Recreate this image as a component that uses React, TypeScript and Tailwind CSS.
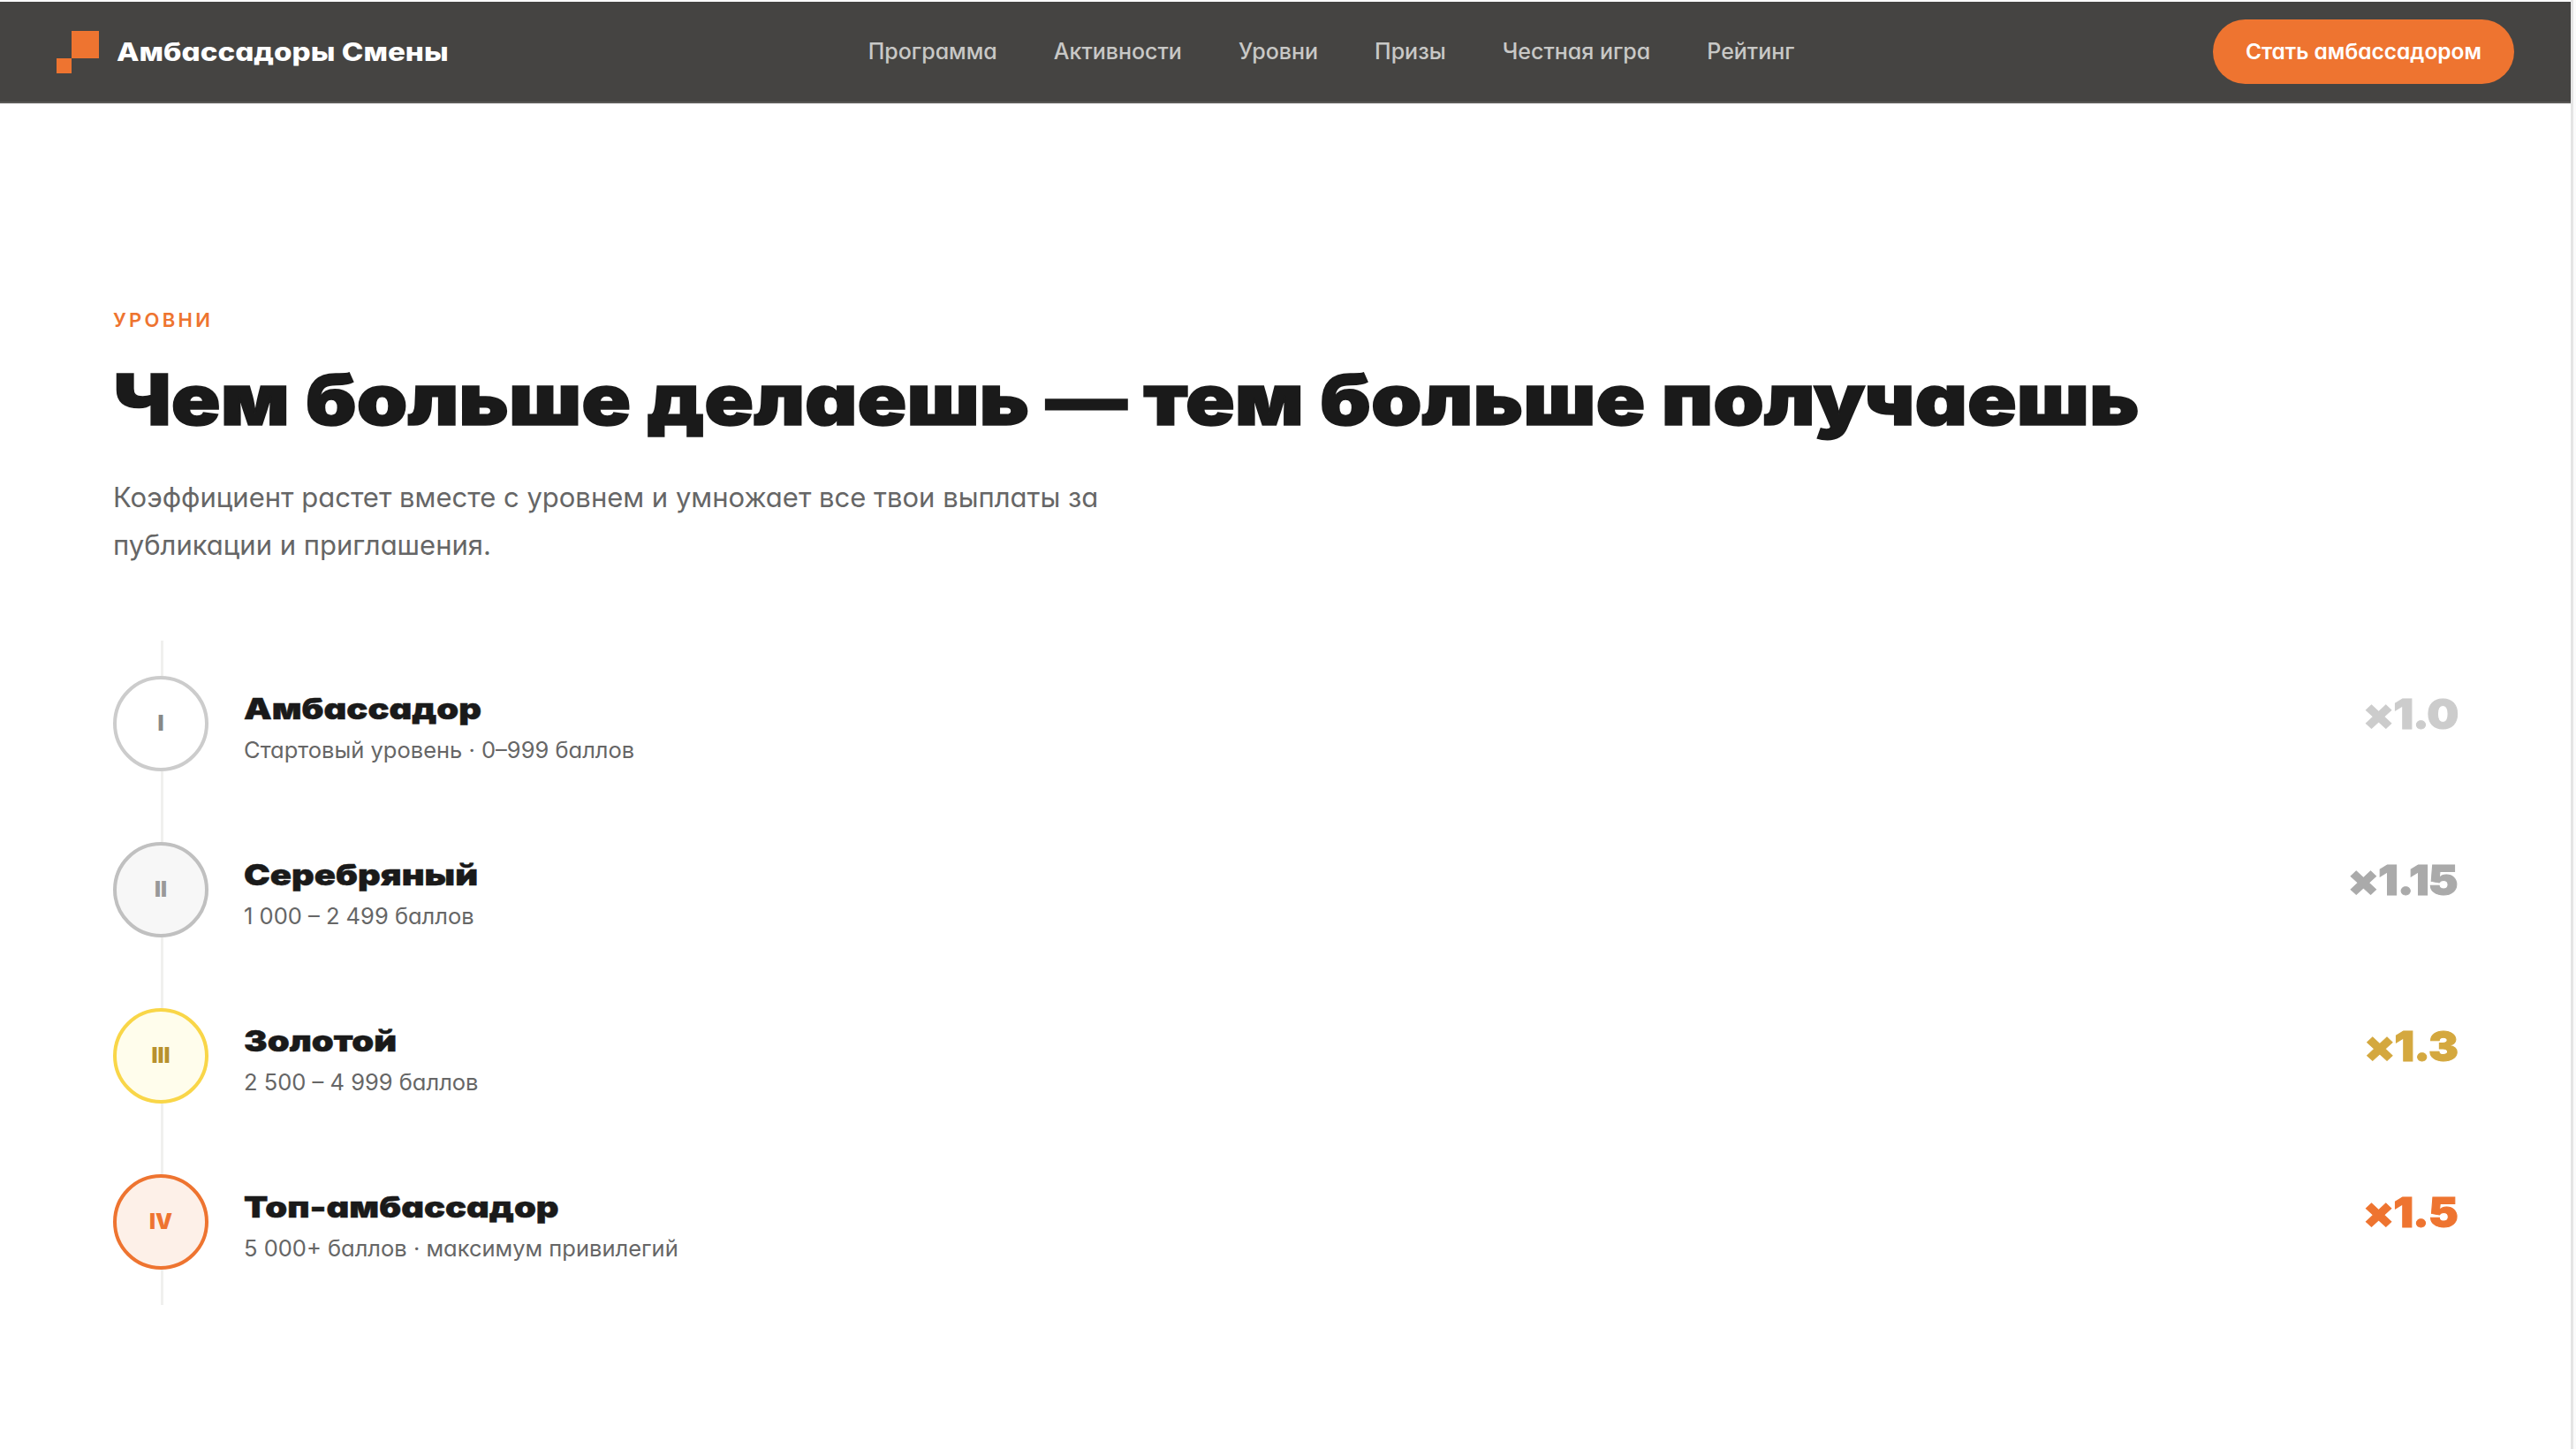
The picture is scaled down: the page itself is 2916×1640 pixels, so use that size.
const navItems = ["Программа", "Активности", "Уровни", "Призы", "Честная игра", "Рейтинг"];

const levels = [
  {
    num: "I",
    title: "Амбассадор",
    sub: "Стартовый уровень · 0–999 баллов",
    mult: "×1.0",
    circle: "border-[#cccccc] bg-white text-[#888888]",
    multColor: "text-[#cccccc]",
  },
  {
    num: "II",
    title: "Серебряный",
    sub: "1 000 – 2 499 баллов",
    mult: "×1.15",
    circle: "border-[#c0c0c0] bg-[#f7f7f7] text-[#999999]",
    multColor: "text-[#aaaaaa]",
  },
  {
    num: "III",
    title: "Золотой",
    sub: "2 500 – 4 999 баллов",
    mult: "×1.3",
    circle: "border-[#f9d648] bg-[#fffdec] text-[#b8902f]",
    multColor: "text-[#d4a83f]",
  },
  {
    num: "IV",
    title: "Топ-амбассадор",
    sub: "5 000+ баллов · максимум привилегий",
    mult: "×1.5",
    circle: "border-[#ee7430] bg-[#fdf0e8] text-[#ee7430]",
    multColor: "text-[#ee7430]",
  },
];

export default function App() {
  return (
    <div className="flex min-h-[1640px] overflow-hidden bg-white font-['Inter',sans-serif] [font-feature-settings:'cv11']">
      <div className="w-[2910px] shrink-0">
        <header className="mt-[2px] flex h-[115px] items-center justify-between border-b-[2px] border-[#5a5957] bg-[#454442] px-[64px]">
          <div className="flex items-center">
            <div className="flex h-[48px] w-[48px] shrink-0 items-start">
              <div className="mt-[31px] h-[17px] w-[17px] bg-[#ee7430]" />
              <div className="h-[31px] w-[31px] bg-[#ee7430]" />
            </div>
            <span className="ml-[20px] origin-left scale-x-[1.185] text-[28px] font-extrabold whitespace-nowrap text-white">
              Амбассадоры Смены
            </span>
          </div>
          <nav className="ml-[60px] flex gap-[64px]">
            {navItems.map((item) => (
              <a key={item} className="text-[25px] font-medium whitespace-nowrap text-[#c8c8c6]">
                {item}
              </a>
            ))}
          </nav>
          <button className="h-[73px] w-[341px] rounded-full bg-[#ee7430] text-[24.5px] font-semibold whitespace-nowrap text-white">
            Стать амбассадором
          </button>
        </header>

        <main className="px-[128px] pt-[231px]">
          <p className="text-[22px] leading-[28px] font-semibold tracking-[3.3px] text-[#ee7430]">УРОВНИ</p>
          <h1 className="mt-[28px] w-fit origin-left scale-x-[1.152] text-[80px] leading-[96px] font-black whitespace-nowrap text-[#1a1a1a] [-webkit-text-stroke:1.5px_#1a1a1a]">
            Чем больше делаешь — тем больше получаешь
          </h1>
          <p className="mt-[36px] w-[1200px] text-[31px] leading-[54px] text-[#666666]">
            Коэффициент растет вместе с уровнем и умножает все твои выплаты за
            <br />
            публикации и приглашения.
          </p>

          <div className="relative mt-[81px]">
            <div className="absolute top-0 bottom-0 left-[54px] w-[3px] bg-[#f0f0ee]" />
            {levels.map((lvl) => (
              <div key={lvl.num} className="relative flex h-[188px] items-center">
                <div
                  className={`flex h-[108px] w-[108px] shrink-0 items-center justify-center rounded-full border-[4.5px] text-[24px] font-black ${lvl.circle}`}
                >
                  {lvl.num}
                </div>
                <div className="ml-[40px] flex-1 pt-[10px]">
                  <div className="w-fit origin-left scale-x-[1.21] text-[33px] leading-[40px] font-black text-[#1a1a1a] [-webkit-text-stroke:0.5px_#1a1a1a]">
                    {lvl.title}
                  </div>
                  <div className="mt-[9px] text-[25.5px] leading-[36px] text-[#666666]">{lvl.sub}</div>
                </div>
                <div
                  className={`mb-[22px] origin-right scale-x-[1.08] text-[47px] leading-[56px] font-black tracking-[-1px] [-webkit-text-stroke:1px_currentColor] ${lvl.multColor}`}
                >
                  {lvl.mult}
                </div>
              </div>
            ))}
          </div>
        </main>
      </div>
      <div className="w-[6px] shrink-0 border-l-[3px] border-[#e4e4e4] bg-[#fafafa]" />
    </div>
  );
}
